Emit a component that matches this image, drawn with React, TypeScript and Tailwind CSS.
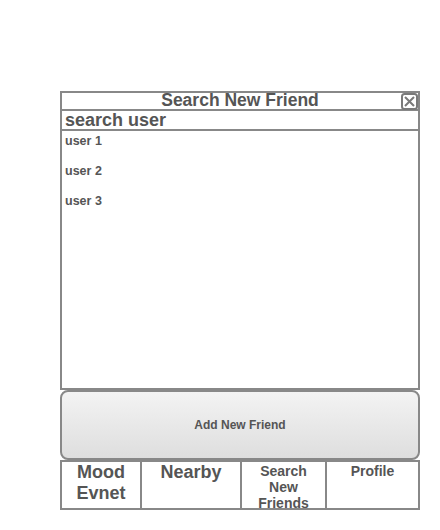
const users = ['user 1', 'user 2', 'user 3'];

function CloseBox() {
  return (
    <svg width="17" height="17" viewBox="0 0 17 17" className="block">
      <rect x="1" y="1" width="15" height="15" rx="2.5" fill="white" stroke="#7a7a7a" strokeWidth="2" />
      <path d="M4 4 L13 13 M13 4 L4 13" stroke="#7a7a7a" strokeWidth="2" />
    </svg>
  );
}

export default function App() {
  return (
    <div className="w-[440px] h-[530px] bg-white pt-[91px] pl-[60px] font-['Liberation_Sans',Arial,sans-serif] text-[#555]">
      <div className="w-[360px] flex flex-col">
        {/* title bar */}
        <div className="relative h-[20px] border-2 border-[#888] flex items-center justify-center">
          <span className="text-[17.5px] font-bold leading-none">Search New Friend</span>
          <div className="absolute right-[0px] top-[0px]">
            <CloseBox />
          </div>
        </div>

        {/* search field */}
        <div className="h-[20px] border-x-2 border-b-2 border-[#888] flex items-center pl-[3px]">
          <span className="text-[18px] font-bold leading-none">search user</span>
        </div>

        {/* list */}
        <div className="h-[259px] border-x-2 border-b-2 border-[#888] pl-[3px] pt-[2px] flex flex-col">
          {users.map((u) => (
            <div key={u} className="h-[30px] text-[12.5px] font-bold leading-[16px]">
              {u}
            </div>
          ))}
        </div>

        {/* add button */}
        <button className="h-[70px] rounded-[8px] border-2 border-[#888] bg-gradient-to-b from-[#f3f3f3] to-[#dedede] text-[12px] font-bold text-[#555] flex items-center justify-center">
          Add New Friend
        </button>

        {/* tabs */}
        <div className="h-[50px] overflow-hidden border-2 border-[#888] grid grid-cols-[78px_100px_85px_93px] text-center font-bold">
          <div className="text-[18px] leading-[21px]">
            Mood
            <br />
            Evnet
          </div>
          <div className="border-l-2 border-[#888] text-[18px] leading-[21px]">Nearby</div>
          <div className="border-l-2 border-[#888] text-[14px] leading-[16px] pt-[1px]">
            Search
            <br />
            New
            <br />
            Friends
          </div>
          <div className="border-l-2 border-[#888] text-[14px] leading-[16px] pt-[1px]">Profile</div>
        </div>
      </div>
    </div>
  );
}
